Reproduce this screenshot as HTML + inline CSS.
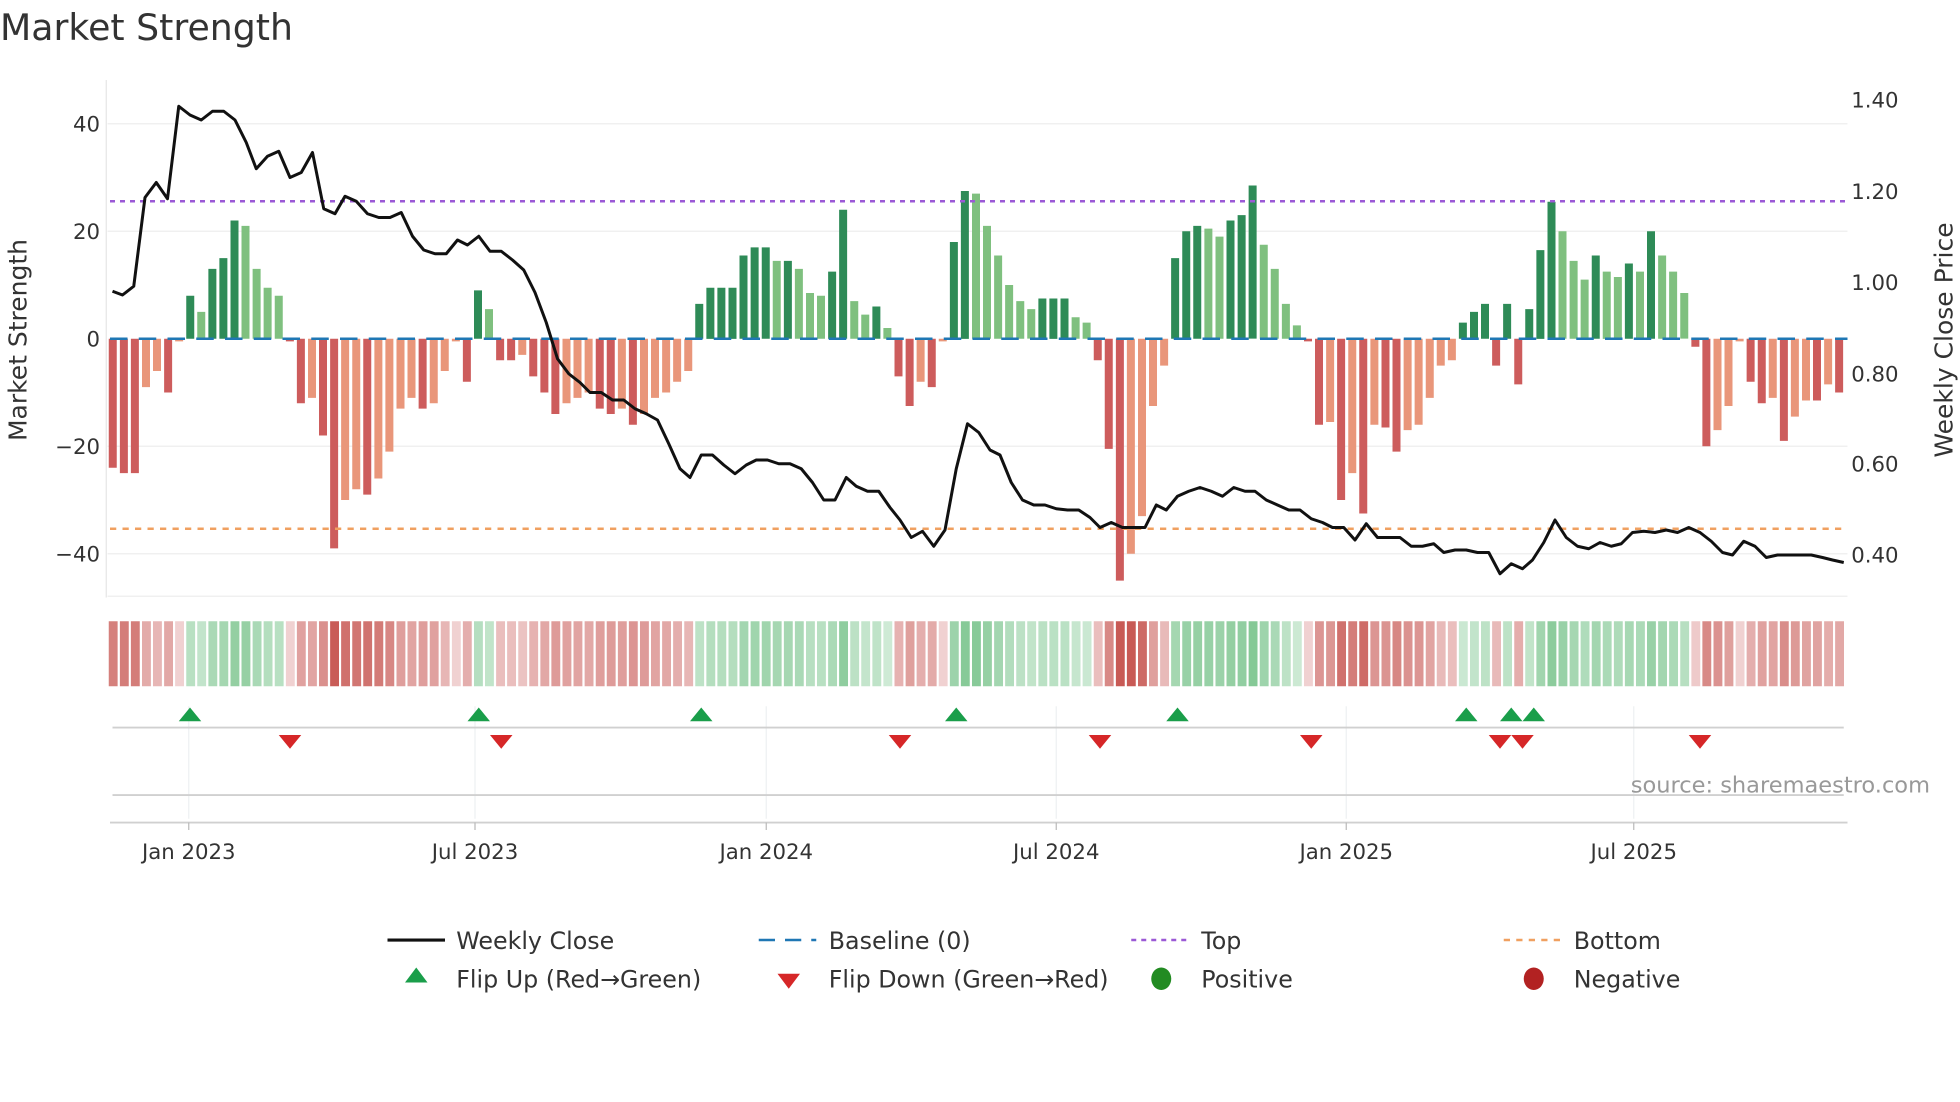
<!DOCTYPE html>
<html><head><meta charset="utf-8"><style>
html,body{margin:0;padding:0;background:#fff;width:1960px;height:1102px;overflow:hidden}
svg{display:block}
text{font-family:"DejaVu Sans","Liberation Sans",sans-serif}
</style></head><body>
<svg id="s" width="1960" height="1102" viewBox="0 0 1568 881.6" xmlns="http://www.w3.org/2000/svg">
<rect width="1568" height="882" fill="#fff"/>
<text x="0" y="32" font-size="29" fill="#333">Market Strength</text>
<g stroke="#eeeeee" stroke-width="1">
<line x1="86" y1="99" x2="1478" y2="99"/><line x1="86" y1="185" x2="1478" y2="185"/>
<line x1="86" y1="357" x2="1478" y2="357"/><line x1="86" y1="443" x2="1478" y2="443"/>
</g>
<line x1="85" y1="64" x2="85" y2="478" stroke="#e6e6e6"/>
<line x1="86" y1="477" x2="1478" y2="477" stroke="#eeeeee"/>
<g id="bars"></g>
<g id="strip"></g>
<line x1="88" y1="271" x2="1478" y2="271" stroke="#1f77b4" stroke-width="2" stroke-dasharray="14,9"/>
<line x1="88" y1="161" x2="1476" y2="161" stroke="#9b59d6" stroke-width="2" stroke-dasharray="4,4"/>
<line x1="88" y1="423" x2="1476" y2="423" stroke="#f0a060" stroke-width="2" stroke-dasharray="5,5"/>
<polyline id="price" fill="none" stroke="#111" stroke-width="2.4" stroke-linejoin="round"/>
<g font-size="17" fill="#333" text-anchor="end">
<text x="80" y="105">40</text><text x="80" y="191">20</text><text x="80" y="277">0</text>
<text x="80" y="363">−20</text><text x="80" y="449">−40</text>
</g>
<g font-size="17" fill="#333">
<text x="1481" y="86">1.40</text><text x="1481" y="159">1.20</text><text x="1481" y="232">1.00</text>
<text x="1481" y="305">0.80</text><text x="1481" y="377">0.60</text><text x="1481" y="450">0.40</text>
</g>
<text transform="translate(21,272) rotate(-90)" font-size="20" fill="#333" text-anchor="middle">Market Strength</text>
<text transform="translate(1562,272) rotate(-90)" font-size="20" fill="#333" text-anchor="middle">Weekly Close Price</text>
<g stroke="#eef0f2" stroke-width="1">
<line x1="151" y1="565" x2="151" y2="655"/><line x1="380" y1="565" x2="380" y2="655"/>
<line x1="613" y1="565" x2="613" y2="655"/><line x1="845" y1="565" x2="845" y2="655"/>
<line x1="1077" y1="565" x2="1077" y2="655"/><line x1="1307" y1="565" x2="1307" y2="655"/>
</g>
<line x1="90" y1="582" x2="1475" y2="582" stroke="#d0d0d0" stroke-width="1.5"/>
<line x1="90" y1="636" x2="1475" y2="636" stroke="#d0d0d0" stroke-width="1.5"/>
<line x1="88" y1="658" x2="1478" y2="658" stroke="#d0d0d0" stroke-width="1.5"/>
<g stroke="#bbb"><line x1="151" y1="658" x2="151" y2="664"/><line x1="380" y1="658" x2="380" y2="664"/><line x1="613" y1="658" x2="613" y2="664"/><line x1="845" y1="658" x2="845" y2="664"/><line x1="1077" y1="658" x2="1077" y2="664"/><line x1="1307" y1="658" x2="1307" y2="664"/></g>
<g id="marks"></g>
<text x="1544" y="634" font-size="18" fill="#999" text-anchor="end">source: sharemaestro.com</text>
<g font-size="17" fill="#333" text-anchor="middle">
<text x="151" y="687">Jan 2023</text><text x="380" y="687">Jul 2023</text><text x="613" y="687">Jan 2024</text>
<text x="845" y="687">Jul 2024</text><text x="1077" y="687">Jan 2025</text><text x="1307" y="687">Jul 2025</text>
</g>
<g font-size="19" fill="#333">
<line x1="310" y1="752" x2="356" y2="752" stroke="#111" stroke-width="2.5"/>
<text x="365" y="759">Weekly Close</text>
<line x1="607" y1="752" x2="653" y2="752" stroke="#1f77b4" stroke-width="2" stroke-dasharray="13,8"/>
<text x="663" y="759">Baseline (0)</text>
<line x1="905" y1="752" x2="951" y2="752" stroke="#9b59d6" stroke-width="2" stroke-dasharray="4,4"/>
<text x="961" y="759">Top</text>
<line x1="1203" y1="752" x2="1249" y2="752" stroke="#f0a060" stroke-width="2" stroke-dasharray="5,5"/>
<text x="1259" y="759">Bottom</text>
<polygon points="333,774 342,786 324,786" fill="#1a9e4a"/>
<text x="365" y="790">Flip Up (Red→Green)</text>
<polygon points="622,779 640,779 631,791" fill="#d62728"/>
<text x="663" y="790">Flip Down (Green→Red)</text>
<ellipse cx="929" cy="783" rx="8" ry="9" fill="#228b22"/>
<text x="961" y="790">Positive</text>
<ellipse cx="1227" cy="783" rx="8" ry="9" fill="#b22222"/>
<text x="1259" y="790">Negative</text>
</g>
</svg>
<script>
var v=[-24,-25,-25,-9,-6,-10,-0.5,8,5,13,15,22,21,13,9.5,8,-0.5,-12,-11,-18,-39,-30,-28,-29,-26,-21,-13,-11,-13,-12,-6,-0.5,-8,9,5.5,-4,-4,-3,-7,-10,-14,-12,-11,-10,-13,-14,-13,-16,-14,-11,-10,-8,-6,6.5,9.5,9.5,9.5,15.5,17,17,14.5,14.5,13,8.5,8,12.5,24,7,4.5,6,2,-7,-12.5,-8,-9,-0.5,18,27.5,27,21,15.5,10,7,5.5,7.5,7.5,7.5,4,3,-4,-20.5,-45,-40,-33,-12.5,-5,15,20,21,20.5,19,22,23,28.5,17.5,13,6.5,2.5,-0.5,-16,-15.5,-30,-25,-32.5,-16,-16.5,-21,-17,-16,-11,-5,-4,3,5,6.5,-5,6.5,-8.5,5.5,16.5,25.5,20,14.5,11,15.5,12.5,11.5,14,12.5,20,15.5,12.5,8.5,-1.5,-20,-17,-12.5,-0.5,-8,-12,-11,-19,-14.5,-11.5,-11.5,-8.5,-10];
var p=[[90,233],[98,236],[107,229],[116,158],[125,146],[134,159],[143,85],[152,92],[161,96],[170,89],[179,89],[188,96],[197,114],[205,135],[214,125],[223,121],[232,142],[241,138],[250,122],[259,167],[268,171],[276,157],[285,161],[294,171],[303,174],[312,174],[321,170],[330,189],[339,200],[348,203],[357,203],[366,192],[374,196],[383,189],[392,201],[401,201],[410,208],[419,216],[428,234],[437,258],[446,287],[455,299],[464,306],[472,314],[481,314],[490,320],[499,320],[508,327],[517,331],[526,336],[535,355],[544,375],[552,382],[561,364],[570,364],[579,372],[588,379],[597,372],[605,368],[614,368],[623,371],[632,371],[641,375],[650,386],[659,400],[668,400],[677,382],[685,389],[694,393],[703,393],[712,406],[720,416],[729,430],[738,425],[747,437],[756,424],[765,375],[774,339],[783,346],[792,360],[800,364],[809,386],[818,400],[827,404],[836,404],[845,407],[854,408],[863,408],[872,414],[880,422],[889,418],[898,422],[907,422],[916,422],[925,404],[933,408],[942,397],[951,393],[960,390],[969,393],[978,397],[987,390],[996,393],[1004,393],[1013,400],[1022,404],[1031,408],[1040,408],[1049,415],[1058,418],[1066,422],[1075,422],[1084,432],[1093,419],[1102,430],[1111,430],[1120,430],[1129,437],[1138,437],[1147,435],[1155,442],[1164,440],[1173,440],[1182,442],[1191,442],[1200,459],[1209,451],[1218,455],[1226,448],[1235,434],[1244,416],[1253,430],[1262,437],[1271,439],[1280,434],[1289,437],[1297,435],[1306,426],[1315,425],[1324,426],[1333,424],[1342,426],[1351,422],[1360,426],[1369,433],[1378,442],[1386,444],[1395,433],[1404,437],[1413,446],[1422,444],[1431,444],[1440,444],[1449,444],[1458,446],[1466,448],[1475,450]];
var NS="http://www.w3.org/2000/svg";
function el(t,a,par){var e=document.createElementNS(NS,t);for(var k in a)e.setAttribute(k,a[k]);document.getElementById(par).appendChild(e);return e;}
var x0=87,dx=(1478-88)/v.length;
function mix(a,b,t){return 'rgb('+[0,1,2].map(function(i){return Math.round(a[i]+(b[i]-a[i])*t)}).join(',')+')';}
for(var i=0;i<v.length;i++){
  var x=x0+i*dx,val=v[i],prev=i?v[i-1]:0,c;
  if(val>=0)c=(val>=prev)?'#2e8b57':'#7fc07f';else c=(val<=prev)?'#cd5c5c':'#e9967a';
  var h=Math.abs(val)*4.3,y=val>=0?271-h:271;
  el('rect',{x:x.toFixed(1),y:y.toFixed(1),width:(dx*0.72).toFixed(1),height:Math.max(h,0.8).toFixed(1),fill:c},'bars');
  var t=Math.min(Math.abs(val)/40,1),sc;
  if(val>0)sc=mix([220,240,225],[110,190,130],Math.pow(t,0.7));else sc=mix([242,215,215],[200,90,85],Math.pow(t,0.7));
  el('rect',{x:x.toFixed(1),y:497,width:(dx*0.8).toFixed(1),height:52,fill:sc},'strip');
}
document.getElementById('price').setAttribute('points',p.map(function(q){return q.join(',')}).join(' '));
[152,383,561,765,942,1173,1209,1227].forEach(function(x){el('polygon',{points:(x)+',566 '+(x+9)+',577 '+(x-9)+',577',fill:'#1a9e4a'},'marks');});
[232,401,720,880,1049,1200,1218,1360].forEach(function(x){el('polygon',{points:(x-9)+',588 '+(x+9)+',588 '+x+',599',fill:'#d62728'},'marks');});
</script>
</body></html>
